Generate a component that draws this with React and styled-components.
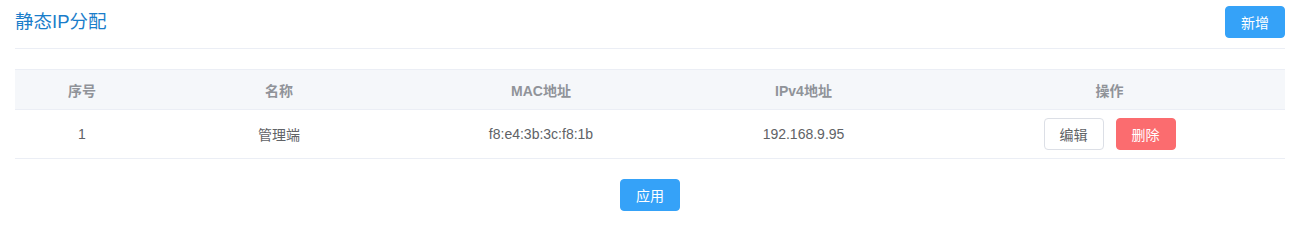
import React from "react";
import styled, { createGlobalStyle } from "styled-components";

const Global = createGlobalStyle`
  html, body { margin: 0; padding: 0; background: #fff; }
  body { font-family: "Liberation Sans", "Noto Sans CJK SC", sans-serif; font-size: 14px; color: #606266; }
`;

const Page = styled.div`
  padding: 0 5px 0 15px;
`;

const Header = styled.div`
  display: flex;
  align-items: flex-start;
  justify-content: space-between;
  height: 49px;
  border-bottom: 1px solid #ebeef5;
  box-sizing: border-box;
  padding-top: 6px;
`;

const Title = styled.h2`
  margin: 0;
  font-size: 18.5px;
  font-weight: normal;
  color: #1a7dca;
  line-height: 32px;
`;

const Button = styled.button`
  font-family: inherit;
  font-size: 14px;
  width: 60px;
  height: 32px;
  border-radius: 4px;
  padding: 0;
  cursor: pointer;
  border: 1px solid ${(p) => (p.$variant === "primary" ? "#35a2f8" : p.$variant === "danger" ? "#fb6c6f" : "#dcdfe6")};
  background: ${(p) => (p.$variant === "primary" ? "#35a2f8" : p.$variant === "danger" ? "#fb6c6f" : "#fff")};
  color: ${(p) => (p.$variant ? "#fff" : "#606266")};
`;

const Table = styled.div`
  margin-top: 20px;
  border-top: 1px solid #ebeef5;
`;

const cols = "134px 260px 264px 261px 351px";

const HeadRow = styled.div`
  display: grid;
  grid-template-columns: ${cols};
  box-sizing: border-box;
  height: 40px;
  background: #f5f7fa;
  border-bottom: 1px solid #ebeef5;
`;

const HeadCell = styled.div`
  display: flex;
  align-items: center;
  justify-content: center;
  color: #909399;
  font-weight: bold;
`;

const Row = styled.div`
  display: grid;
  grid-template-columns: ${cols};
  height: 48px;
  border-bottom: 1px solid #ebeef5;
`;

const Cell = styled.div`
  display: flex;
  align-items: center;
  justify-content: center;
  gap: 12px;
`;

const Footer = styled.div`
  display: flex;
  justify-content: center;
  padding-top: 20px;
`;

const rows = [{ id: 1, name: "管理端", mac: "f8:e4:3b:3c:f8:1b", ip: "192.168.9.95" }];

export default function App() {
  return (
    <Page>
      <Global />
      <Header>
        <Title>静态IP分配</Title>
        <Button $variant="primary">新增</Button>
      </Header>
      <Table>
        <HeadRow>
          <HeadCell>序号</HeadCell>
          <HeadCell>名称</HeadCell>
          <HeadCell>MAC地址</HeadCell>
          <HeadCell>IPv4地址</HeadCell>
          <HeadCell>操作</HeadCell>
        </HeadRow>
        {rows.map((r) => (
          <Row key={r.id}>
            <Cell>{r.id}</Cell>
            <Cell>{r.name}</Cell>
            <Cell>{r.mac}</Cell>
            <Cell>{r.ip}</Cell>
            <Cell>
              <Button>编辑</Button>
              <Button $variant="danger">删除</Button>
            </Cell>
          </Row>
        ))}
      </Table>
      <Footer>
        <Button $variant="primary">应用</Button>
      </Footer>
    </Page>
  );
}
